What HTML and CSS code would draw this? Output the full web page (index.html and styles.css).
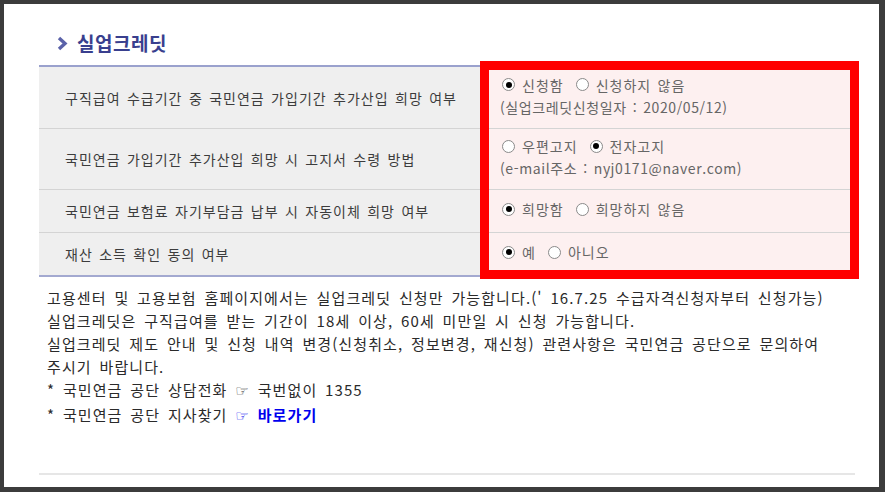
FILE: index.html
```html
<!DOCTYPE html>
<html lang="ko">
<head>
  <meta charset="UTF-8">
  <title>실업크레딧</title>
  <link rel="stylesheet" href="styles.css">
</head>
<body>
  <div class="frame">
    <h2 class="title">
      <svg class="chev" width="11" height="15" viewBox="0 0 11 15"><polyline points="2,2 8,7.5 2,13" fill="none" stroke="#5b62a9" stroke-width="3.4"/></svg>
      실업크레딧
    </h2>

    <div class="table-wrap">
      <div class="row r1">
        <div class="label">구직급여 수급기간 중 국민연금 가입기간 추가산입 희망 여부</div>
        <div class="value">
          <div class="opts">
            <span class="radio on"></span><span class="opt">신청함</span>
            <span class="radio"></span><span class="opt">신청하지 않음</span>
          </div>
          <div class="sub">(실업크레딧신청일자 : 2020/05/12)</div>
        </div>
      </div>
      <div class="row r2">
        <div class="label">국민연금 가입기간 추가산입 희망 시 고지서 수령 방법</div>
        <div class="value">
          <div class="opts">
            <span class="radio"></span><span class="opt">우편고지</span>
            <span class="radio on"></span><span class="opt">전자고지</span>
          </div>
          <div class="sub">(e-mail주소 : nyj0171@naver.com)</div>
        </div>
      </div>
      <div class="row r3">
        <div class="label">국민연금 보험료 자기부담금 납부 시 자동이체 희망 여부</div>
        <div class="value">
          <div class="opts">
            <span class="radio on"></span><span class="opt">희망함</span>
            <span class="radio"></span><span class="opt">희망하지 않음</span>
          </div>
        </div>
      </div>
      <div class="row r4">
        <div class="label">재산 소득 확인 동의 여부</div>
        <div class="value">
          <div class="opts">
            <span class="radio on"></span><span class="opt">예</span>
            <span class="radio"></span><span class="opt">아니오</span>
          </div>
        </div>
      </div>
      <div class="mark"></div>
    </div>

    <div class="notes">
      <p>고용센터 및 고용보험 홈페이지에서는 실업크레딧 신청만 가능합니다.(' 16.7.25 수급자격신청자부터 신청가능)</p>
      <p>실업크레딧은 구직급여를 받는 기간이 18세 이상, 60세 미만일 시 신청 가능합니다.</p>
      <p>실업크레딧 제도 안내 및 신청 내역 변경(신청취소, 정보변경, 재신청) 관련사항은 국민연금 공단으로 문의하여<br>주시기 바랍니다.</p>
      <p>* 국민연금 공단 상담전화 <span class="hand">☞</span> 국번없이 1355</p>
      <p>* 국민연금 공단 지사찾기 <a class="go" href="#"><span class="hand">☞</span> 바로가기</a></p>
    </div>

    <div class="bottom-line"></div>
  </div>
</body>
</html>
```

FILE: styles.css
```css
body {
  margin: 0;
  background: #3c3c3c;
  font-family: "Noto Sans CJK KR", "Liberation Sans", sans-serif;
}
.frame {
  background: #fff;
  margin: 4px 6px 0 4px;
  height: 483px;
  padding: 24px 24px 0 35px;
  box-sizing: border-box;
}
.title {
  margin: 0 0 0 18px;
  height: 37px;
  display: flex;
  align-items: flex-start;
  gap: 9px;
  font-size: 19px;
  font-weight: bold;
  color: #393f8e;
  line-height: 24px;
  letter-spacing: 0.5px;
  padding-top: 3px;
  box-sizing: border-box;
}
.chev {
  margin-top: 5px;
}
.table-wrap {
  position: relative;
  border-top: 2px solid #9aa1cd;
  border-bottom: 2px solid #a3a9d0;
}
.row {
  display: grid;
  grid-template-columns: 441px 1fr;
  border-bottom: 1px solid #d4d4d4;
  font-size: 14px;
  letter-spacing: 1px;
  word-spacing: 1.5px;
}
.row.r4 {
  border-bottom: none;
}
.r1 { height: 61px; }
.r2 { height: 60px; }
.r3 { height: 42px; }
.r4 { height: 42px; }
.label {
  background: #efefef;
  color: #3c3c3c;
  padding-left: 26px;
  display: flex;
  align-items: center;
}
.value {
  background: #fdf0f0;
  color: #666;
  padding: 0 0 4px 22px;
  display: flex;
  flex-direction: column;
  justify-content: center;
  line-height: 22px;
}
.opts {
  display: flex;
  align-items: center;
}
.radio {
  width: 11px;
  height: 11px;
  border: 1px solid #8a8a8a;
  border-radius: 50%;
  background: #fff;
  display: inline-flex;
  align-items: center;
  justify-content: center;
  margin-right: 7px;
}
.radio.on::after {
  content: "";
  width: 6px;
  height: 6px;
  border-radius: 50%;
  background: #000;
}
.opt {
  margin-right: 12px;
}
.sub {
  margin-left: -2px;
  font-size: 14px;
  letter-spacing: 0.6px;
}
.mark {
  position: absolute;
  left: 441px;
  top: -6px;
  width: 379px;
  height: 218px;
  border: 9px solid #ff0000;
  box-sizing: border-box;
}
.notes {
  margin: 9px 0 0 8px;
  font-size: 15px;
  line-height: 23px;
  color: #2a2a2a;
  letter-spacing: 1.1px;
  word-spacing: 2.5px;
}
.notes p {
  margin: 0;
}
.hand {
  font-family: "DejaVu Sans", sans-serif;
  font-size: 15px;
  font-weight: bold;
}
.go {
  color: #0000ee;
  font-weight: bold;
  text-decoration: none;
}
.bottom-line {
  margin-top: 45px;
  height: 2px;
  background: #e6e6e6;
}
```
